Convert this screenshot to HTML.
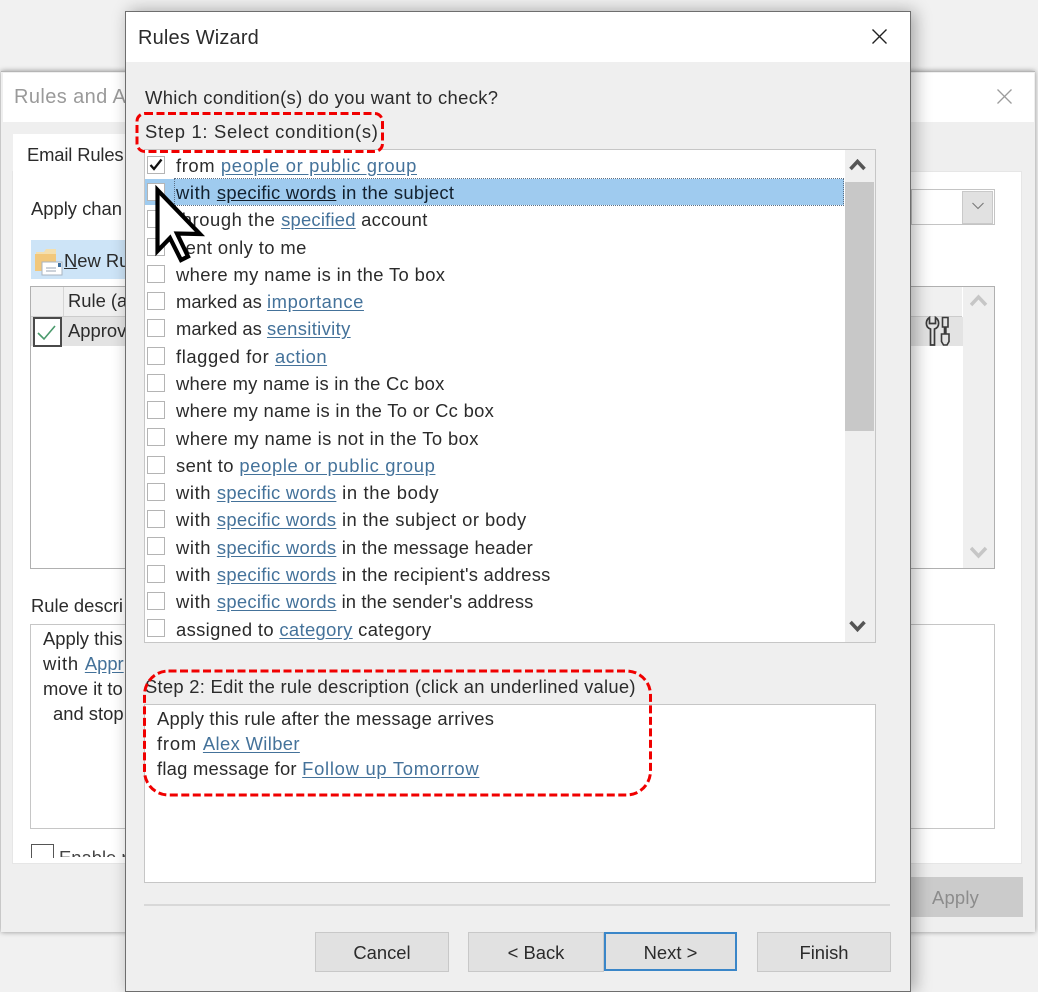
<!DOCTYPE html>
<html><head><meta charset="utf-8"><style>
html,body{margin:0;padding:0}
body{width:1038px;height:991px;background:#f1f1f1;position:relative;overflow:hidden;font-family:"Liberation Sans",sans-serif;font-size:18.4px;color:#2b2b2b;filter:blur(.35px)}
div{position:absolute}
.t{position:absolute;white-space:nowrap;line-height:24px;height:24px}
.l{color:#44729a;text-decoration:underline;text-underline-offset:2px}
.cb{position:absolute;left:147px;width:16px;height:16px;background:#fff;border:1px solid #b4b4b4}
.btn{position:absolute;top:932px;height:38px;background:#e1e1e1;border:1px solid #c8c8c8;text-align:center;line-height:40px;color:#2b2b2b}
.w{background:#fff}
.sw{letter-spacing:.29px}
</style></head><body>

<!-- back window -->
<div style="left:1px;top:71px;width:1034px;height:860px;background:#efefef;border-top:1px solid #b5b5b5;box-shadow:0 0 5px rgba(0,0,0,.4)"></div>
<div class="w" style="left:3px;top:73px;width:1031px;height:49px"></div>
<div class="t" style="left:14px;top:85px;font-size:20px;color:#9a9a9a;letter-spacing:.4px">Rules and A</div>
<svg style="position:absolute;left:996px;top:88px" width="17" height="17"><path d="M1.5 1.5L15.5 15.5M15.5 1.5L1.5 15.5" stroke="#9c9c9c" stroke-width="1.3" fill="none"/></svg>
<div class="w" style="left:13px;top:172px;width:1008px;height:691px;outline:1px solid #e6e6e6"></div>
<div class="w" style="left:13px;top:134px;width:115px;height:40px"></div>
<div class="t" style="left:27px;top:143px;letter-spacing:-.15px">Email Rules</div>
<div class="t" style="left:31px;top:197px">Apply chan</div>
<div style="left:911px;top:189px;width:82px;height:34px;border:1px solid #c4c4c4;background:#fff"></div>
<div style="left:962px;top:191px;width:29px;height:31px;background:#e1e1e1;border:1px solid #c9c9c9"></div>
<svg style="position:absolute;left:971px;top:201px" width="14" height="10"><path d="M1.5 2L7 7.5L12.5 2" stroke="#777" stroke-width="1.1" fill="none"/></svg>
<div style="left:31px;top:240px;width:100px;height:39px;background:#cde4f7"></div>
<svg style="position:absolute;left:34px;top:247px" width="30" height="29"><path d="M2 5h8l2-3h10v9H2z" fill="#f4dfae"/><path d="M1 7h21v17H1z" fill="#f2c87c"/><path d="M8 15h20v13H8z" fill="#fff" stroke="#a9b4c0"/><path d="M12 21h10M12 24h10" stroke="#98a6b5"/><path d="M24 16h3v4h-3z" fill="#3e6f9e"/></svg>
<div class="t" style="left:64px;top:249px"><u>N</u>ew Ru</div>
<div style="left:30px;top:286px;width:963px;height:281px;border:1px solid #b0b0b0;background:#fff"></div>
<div style="left:31px;top:287px;width:931px;height:29px;background:#f0f0f0;border-bottom:1px solid #ccc"></div>
<div style="left:63px;top:287px;width:1px;height:29px;background:#d5d5d5"></div>
<div style="left:31px;top:317px;width:932px;height:29px;background:#e3e3e3"></div>
<div style="left:963px;top:287px;width:31px;height:281px;background:#efefef"></div>
<div style="left:33px;top:317px;width:25px;height:26px;border:2px solid #4a4a4a;background:#fff"></div>
<svg style="position:absolute;left:35px;top:320px" width="26" height="24"><path d="M3 13L9 19L20 6" stroke="#4a9a6c" stroke-width="1.6" fill="none"/></svg>
<div class="t" style="left:68px;top:289px">Rule (a</div>
<div class="t" style="left:68px;top:319px">Approv</div>
<svg style="position:absolute;left:925px;top:315px" width="28" height="32"><path d="M5.500 30V14C2.500 13 1 10.500 1.500 7C1.800 5 3 3.500 4.500 2.500V8.500H10.500V2.500C12 3.500 13.200 5 13.500 7C14 10.500 12.500 13 9.500 14V30Z" fill="none" stroke="#3a3a3a" stroke-width="1.7"/><path d="M17.500 2.500h5.500v9.500h-5.500z" fill="none" stroke="#3a3a3a" stroke-width="1.6"/><path d="M20.200 12v7" stroke="#3a3a3a" stroke-width="3"/><path d="M16.500 19h7.500v7.500l-2 3.500h-3.500l-2-3.500z" fill="none" stroke="#3a3a3a" stroke-width="1.6"/></svg>
<svg style="position:absolute;left:970px;top:293px" width="18" height="16"><path d="M1 12L8.500 4L16 12" stroke="#c6c6c6" stroke-width="3.500" fill="none"/></svg>
<svg style="position:absolute;left:970px;top:544px" width="18" height="16"><path d="M1 4L8.500 12L16 4" stroke="#c6c6c6" stroke-width="3.500" fill="none"/></svg>
<div class="t" style="left:31px;top:594px">Rule descri</div>
<div style="left:30px;top:624px;width:963px;height:203px;border:1px solid #c6c6c6;background:#fff"></div>
<div class="t" style="left:43px;top:627px">Apply this</div>
<div class="t" style="left:43px;top:652px"><span style="letter-spacing:.8px">with </span><span class="l">Appr</span></div>
<div class="t" style="left:43px;top:677px">move it to</div>
<div class="t" style="left:53px;top:702px">and stop</div>
<div style="left:31px;top:844px;width:21px;height:13px;border:1px solid #555;border-bottom:0;background:#fff"></div>
<div style="left:59px;top:846px;height:11px;overflow:hidden;width:70px"><div class="t" style="left:0;top:0;color:#444">Enable r</div></div>
<div style="left:900px;top:877px;width:123px;height:40px;background:#cbcbcb"></div>
<div class="t" style="left:932px;top:886px;color:#8c8c8c;letter-spacing:.2px">Apply</div>

<!-- front window -->
<div style="left:125px;top:11px;width:784px;height:979px;background:#efefef;border:1px solid #6e6e6e;box-shadow:4px 0 16px rgba(0,0,0,.32)"></div>
<div class="w" style="left:126px;top:12px;width:784px;height:50px"></div>
<div class="t" style="left:138px;top:26px;font-size:20px;letter-spacing:.17px">Rules Wizard</div>
<svg style="position:absolute;left:871px;top:28px" width="17" height="17"><path d="M1.5 1.500L15.500 15.500M15.500 1.500L1.500 15.500" stroke="#222" stroke-width="1.4" fill="none"/></svg>
<div class="t" style="left:145px;top:86px;letter-spacing:.35px">Which condition(s) do you want to check?</div>
<div class="t" style="left:145px;top:120px;letter-spacing:.7px">Step 1: Select condition(s)</div>

<div style="left:144px;top:149px;width:730px;height:492px;background:#fff;border:1px solid #c6c6c6"></div>
<div style="left:845px;top:150px;width:30px;height:492px;background:#efefef"></div>
<div style="left:845px;top:182px;width:29px;height:249px;background:#c8c8c8"></div>
<svg style="position:absolute;left:849px;top:157px" width="18" height="16"><path d="M1.500 12L8.500 4.500L15.500 12" stroke="#555" stroke-width="3.500" fill="none"/></svg>
<svg style="position:absolute;left:849px;top:618px" width="18" height="16"><path d="M1.500 4L8.500 11.500L15.500 4" stroke="#555" stroke-width="3.500" fill="none"/></svg>
<div style="left:145px;top:179px;width:699px;height:26px;background:#9fcbef"></div>
<div style="left:174px;top:178px;width:668px;height:26px;border:1px dotted #5a6f85"></div>

<div class="cb" style="top:156px"></div>
<svg style="position:absolute;left:148px;top:157px" width="16" height="16"><path d="M2.500 8L6 12L13.500 2.500" stroke="#111" stroke-width="2.300" fill="none"/></svg>
<div class="cb" style="top:183px"></div>
<div class="cb" style="top:210px"></div>
<div class="cb" style="top:238px"></div>
<div class="cb" style="top:265px"></div>
<div class="cb" style="top:292px"></div>
<div class="cb" style="top:319px"></div>
<div class="cb" style="top:347px"></div>
<div class="cb" style="top:374px"></div>
<div class="cb" style="top:401px"></div>
<div class="cb" style="top:428px"></div>
<div class="cb" style="top:456px"></div>
<div class="cb" style="top:483px"></div>
<div class="cb" style="top:510px"></div>
<div class="cb" style="top:537px"></div>
<div class="cb" style="top:565px"></div>
<div class="cb" style="top:592px"></div>
<div class="cb" style="top:619px"></div>

<div class="t" style="left:176px;top:154px"><span style="letter-spacing:.6px">from </span><span class="l" style="letter-spacing:.64px">people or public group</span></div>
<div class="t" style="left:176px;top:181px;color:#12202e"><span style="letter-spacing:.6px">with </span><u class="sw">specific words</u><span class="sw"> in the subject</span></div>
<div class="t" style="left:176px;top:208px"><span style="letter-spacing:.58px">through the </span><span class="l" style="letter-spacing:.22px">specified</span><span style="letter-spacing:.3px"> account</span></div>
<div class="t" style="left:176px;top:236px;letter-spacing:.4px">sent only to me</div>
<div class="t" style="left:176px;top:263px;letter-spacing:.37px">where my name is in the To box</div>
<div class="t" style="left:176px;top:290px">marked as <span class="l" style="letter-spacing:.6px">importance</span></div>
<div class="t" style="left:176px;top:317px">marked as <span class="l" style="letter-spacing:.36px">sensitivity</span></div>
<div class="t" style="left:176px;top:345px"><span style="letter-spacing:.58px">flagged for </span><span class="l" style="letter-spacing:.5px">action</span></div>
<div class="t" style="left:176px;top:372px;letter-spacing:.23px">where my name is in the Cc box</div>
<div class="t" style="left:176px;top:399px;letter-spacing:.3px">where my name is in the To or Cc box</div>
<div class="t" style="left:176px;top:427px;letter-spacing:.41px">where my name is not in the To box</div>
<div class="t" style="left:176px;top:454px"><span style="letter-spacing:.38px">sent to </span><span class="l" style="letter-spacing:.64px">people or public group</span></div>
<div class="t" style="left:176px;top:481px"><span style="letter-spacing:.6px">with </span><span class="l sw">specific words</span><span style="letter-spacing:.64px"> in the body</span></div>
<div class="t" style="left:176px;top:508px"><span style="letter-spacing:.6px">with </span><span class="l sw">specific words</span><span style="letter-spacing:.45px"> in the subject or body</span></div>
<div class="t" style="left:176px;top:536px"><span style="letter-spacing:.6px">with </span><span class="l sw">specific words</span><span style="letter-spacing:.2px"> in the message header</span></div>
<div class="t" style="left:176px;top:563px"><span style="letter-spacing:.6px">with </span><span class="l sw">specific words</span><span style="letter-spacing:.23px"> in the recipient's address</span></div>
<div class="t" style="left:176px;top:590px"><span style="letter-spacing:.6px">with </span><span class="l sw">specific words</span><span style="letter-spacing:.1px"> in the sender's address</span></div>
<div class="t" style="left:176px;top:618px;letter-spacing:.35px">assigned to <span class="l">category</span> category</div>

<div class="t" style="left:145px;top:675px;letter-spacing:.27px">Step 2: Edit the rule description (click an underlined value)</div>
<div style="left:144px;top:704px;width:730px;height:177px;background:#fff;border:1px solid #c6c6c6"></div>
<div class="t" style="left:157px;top:707px;letter-spacing:.22px">Apply this rule after the message arrives</div>
<div class="t" style="left:157px;top:732px"><span style="letter-spacing:.8px">from </span><span class="l" style="letter-spacing:.36px">Alex Wilber</span></div>
<div class="t" style="left:157px;top:757px"><span style="letter-spacing:.24px">flag message for </span><span class="l" style="letter-spacing:.72px">Follow up Tomorrow</span></div>
<div style="left:144px;top:904px;width:746px;height:2px;background:#d8d8d8"></div>

<div class="btn" style="left:315px;width:132px">Cancel</div>
<div class="btn" style="left:468px;width:134px">&lt; Back</div>
<div class="btn" style="left:604px;width:129px;height:35px;border:2px solid #3a86c8;line-height:38px">Next &gt;</div>
<div class="btn" style="left:757px;width:132px">Finish</div>

<!-- annotations -->
<svg style="position:absolute;left:0;top:0" width="1038" height="991">
<rect x="137" y="113.500" width="245.500" height="38" rx="8" fill="none" stroke="#f00000" stroke-width="3" stroke-dasharray="8 3.500"/>
<rect x="144.500" y="671" width="506" height="124" rx="24" fill="none" stroke="#f00000" stroke-width="3" stroke-dasharray="8 3.500"/>
<path d="M157.500 190V251L170 238L181 260L188 256.500L177 233.500L200 234Z" fill="#fff" stroke="#000" stroke-width="4.200" stroke-linejoin="miter"/>
</svg>
</body></html>
